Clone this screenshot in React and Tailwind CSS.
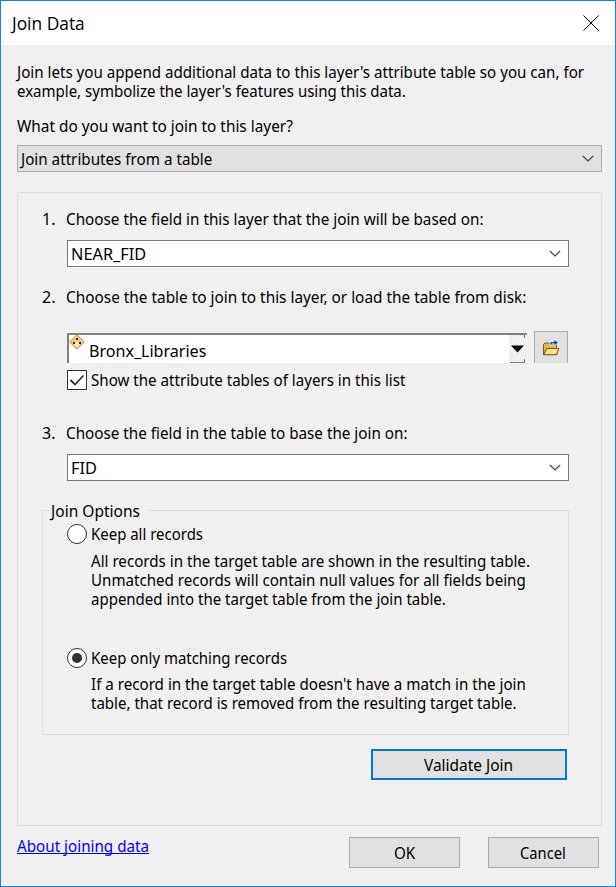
import React from "react";

/* A single line of label text, condensed horizontally by a scale class. */
function Line({ s = "scale-x-[0.95]", className = "", children }) {
  return <span className={`block h-[19px] w-max origin-left whitespace-nowrap ${s} ${className}`}>{children}</span>;
}

function Chevron() {
  return (
    <svg className="mr-[7px] mt-px shrink-0" width="12" height="8" viewBox="0 0 12 8" fill="none" stroke="#444" strokeWidth="1.2">
      <path d="M0.9 1 L6 6 L11.1 1" />
    </svg>
  );
}

function Select({ s, children, className }) {
  return (
    <div className={`flex h-[27px] items-center justify-between border pl-[3px] ${className}`}>
      <Line s={s} className="mt-[2px]">{children}</Line>
      <Chevron />
    </div>
  );
}

function Step({ n, s, children }) {
  return (
    <div className="flex h-[19px]">
      <span className="w-[24px]">{n}.</span>
      <Line s={s}>{children}</Line>
    </div>
  );
}

function Radio({ checked, children }) {
  return (
    <div className="flex h-[20px] items-center">
      <span className="mr-1 flex size-5 shrink-0 items-center justify-center rounded-full border border-[#333] bg-white">
        {checked && <span className="size-[10px] rounded-full bg-[#333]" />}
      </span>
      <Line s="scale-x-[0.935]">{children}</Line>
    </div>
  );
}

function LayerIcon() {
  return (
    <svg width="16" height="16" viewBox="0 0 16 16" className="-mt-px shrink-0">
      <path d="M8 0.8 L15.4 8 L8 15.2 L0.6 8 Z" fill="#f2cb7c" stroke="#b98d4c" strokeWidth="1" />
      <path d="M8 7 L11.5 10.5 L8 14 L4.5 10.5 Z" fill="#fde6a4" />
      <g fill="#222">
        <rect x="7" y="4" width="2" height="2" />
        <rect x="4" y="8" width="2" height="2" />
        <rect x="10" y="8" width="2" height="2" />
      </g>
    </svg>
  );
}

function FolderIcon() {
  return (
    <svg width="18" height="18" viewBox="0 0 18 18">
      <path d="M1.5 15.5 V5.5 L3 4 H7 L8.5 5.5 H14.5 V8 L15 15.5 Z" fill="#dcb752" stroke="#7a5c14" />
      <path d="M1.7 15.8 L4.7 9.5 H16.8 L14.5 15.8 Z" fill="#f6dc86" stroke="#7a5c14" />
      <path d="M8 6.2 V2.6 H12 V0.2 L16.6 3.6 L12 7 V4.9 H10 V6.2 Z" fill="#0b4f96" stroke="#e9f4fb" strokeWidth="0.9" />
    </svg>
  );
}

export default function App() {
  return (
    <div className="flex h-[887px] w-[616px] flex-col border border-[#1883d7] bg-[#f0f0f0] font-['Noto_Sans',sans-serif] text-[16px] leading-[19px] text-black">
      <header className="flex h-[44px] shrink-0 items-center justify-between bg-white pl-[11px] pr-[16px]">
        <h1><Line s="scale-x-[0.965]" className="font-['Open_Sans',sans-serif] text-[18px]">Join Data</Line></h1>
        <svg className="-mt-px" width="16" height="16" viewBox="0 0 16 16" stroke="#000" strokeWidth="1">
          <path d="M0.5 0.5 L15.5 15.5 M15.5 0.5 L0.5 15.5" />
        </svg>
      </header>
      <main className="flex flex-col pl-[16px] pr-[13px] pt-[18px]">
        <Line s="scale-x-[0.946]">Join lets you append additional data to this layer's attribute table so you can, for</Line>
        <Line s="scale-x-[0.938]">example, symbolize the layer's features using this data.</Line>
        <Line s="scale-x-[0.96]" className="mt-[16px]">What do you want to join to this layer?</Line>
        <Select className="mt-[9px] border-[#adadad] bg-[#e1e1e1]">Join attributes from a table</Select>

        <section className="mt-[20px] flex h-[634px] flex-col border border-[#dcdcdc] pl-[24px] pr-[32px] pt-[17px]">
          <Step n="1" s="scale-x-[0.954]">Choose the field in this layer that the join will be based on:</Step>
          <Select s="scale-x-[1.02]" className="ml-[25px] mt-[11px] border-[#7a7a7a] bg-white">NEAR_FID</Select>

          <div className="mt-[21px]"><Step n="2" s="scale-x-[0.96]">Choose the table to join to this layer, or load the table from disk:</Step></div>
          <div className="ml-[25px] mt-[24px] flex h-[32px] items-end">
            <div className="flex h-[30px] w-[460px] border-l-2 border-t-2 border-[#808080] bg-white">
              <LayerIcon />
              <span className="ml-1 mt-[6px] flex-1"><Line s="scale-x-[0.945]" className="text-[17px]">Bronx_Libraries</Line></span>
              <div className="flex w-[18px] flex-col items-end justify-between bg-[#f0f0f0] pr-[2px]">
                <span className="h-[3px] w-px bg-[#707070]" />
                <svg width="14" height="8" viewBox="0 0 14 8"><path d="M0 0.5 H13 L6.5 7.5 Z" /></svg>
                <span className="h-[4px] w-[15px] border-b border-r border-[#808080]" />
              </div>
            </div>
            <button className="ml-[7px] flex h-[32px] w-[34px] items-center justify-center border border-b-0 border-[#adadad] bg-[#e1e1e1]">
              <FolderIcon />
            </button>
          </div>
          <div className="ml-[25px] mt-[7px] flex h-[20px] items-center">
            <span className="mr-1 flex size-5 items-center justify-center border border-[#333] bg-white">
              <svg width="16" height="14" viewBox="0 0 16 14" fill="none" stroke="#333" strokeWidth="1.8"><path d="M1.5 7 L6 11.5 L14.5 2.5" /></svg>
            </span>
            <Line s="scale-x-[0.945]">Show the attribute tables of layers in this list</Line>
          </div>

          <div className="mt-[34px]"><Step n="3" s="scale-x-[0.952]">Choose the field in the table to base the join on:</Step></div>
          <Select s="scale-x-[1.02]" className="ml-[25px] mt-[11px] border-[#7a7a7a] bg-white">FID</Select>

          <div className="mt-[29px] flex h-[225px] flex-col border border-[#dcdcdc] pl-[24px]">
            <div className="-ml-[18px] -mt-[10px] h-[19px] w-[98px] bg-[#f0f0f0] pl-[2px] pt-px"><Line s="scale-x-[0.97]">Join Options</Line></div>
            <div className="mt-[4px]"><Radio>Keep all records</Radio></div>
            <div className="ml-[24px] mt-[8px]">
              <Line s="scale-x-[0.946]">All records in the target table are shown in the resulting table.</Line>
              <Line s="scale-x-[0.944]">Unmatched records will contain null values for all fields being</Line>
              <Line s="scale-x-[0.938]">appended into the target table from the join table.</Line>
            </div>
            <div className="mt-[39px]"><Radio checked>Keep only matching records</Radio></div>
            <div className="ml-[24px] mt-[7px]">
              <Line s="scale-x-[0.947]">If a record in the target table doesn't have a match in the join</Line>
              <Line s="scale-x-[0.94]">table, that record is removed from the resulting target table.</Line>
            </div>
          </div>
          <button className="mr-[2px] mt-[14px] flex h-[31px] w-[196px] items-center justify-center self-end border-2 border-[#0078d7] bg-[#e1e1e1] pl-[2px]"><Line s="scale-x-[0.965]" className="mt-px">Validate Join</Line></button>
        </section>

        <footer className="flex pr-[3px] pt-[11px]">
          <a className="text-[#0000ff]" href="#about"><Line className="underline [text-decoration-skip-ink:none]">About joining data</Line></a>
          <button className="ml-auto flex h-[31px] w-[111px] items-center justify-center border border-[#adadad] bg-[#e1e1e1] pl-[2px]"><Line className="mt-[2px]">OK</Line></button>
          <button className="ml-[28px] flex h-[31px] w-[111px] items-center justify-center border border-[#adadad] bg-[#e1e1e1] pl-[2px]"><Line s="scale-x-[0.92]" className="mt-[2px]">Cancel</Line></button>
        </footer>
      </main>
    </div>
  );
}
